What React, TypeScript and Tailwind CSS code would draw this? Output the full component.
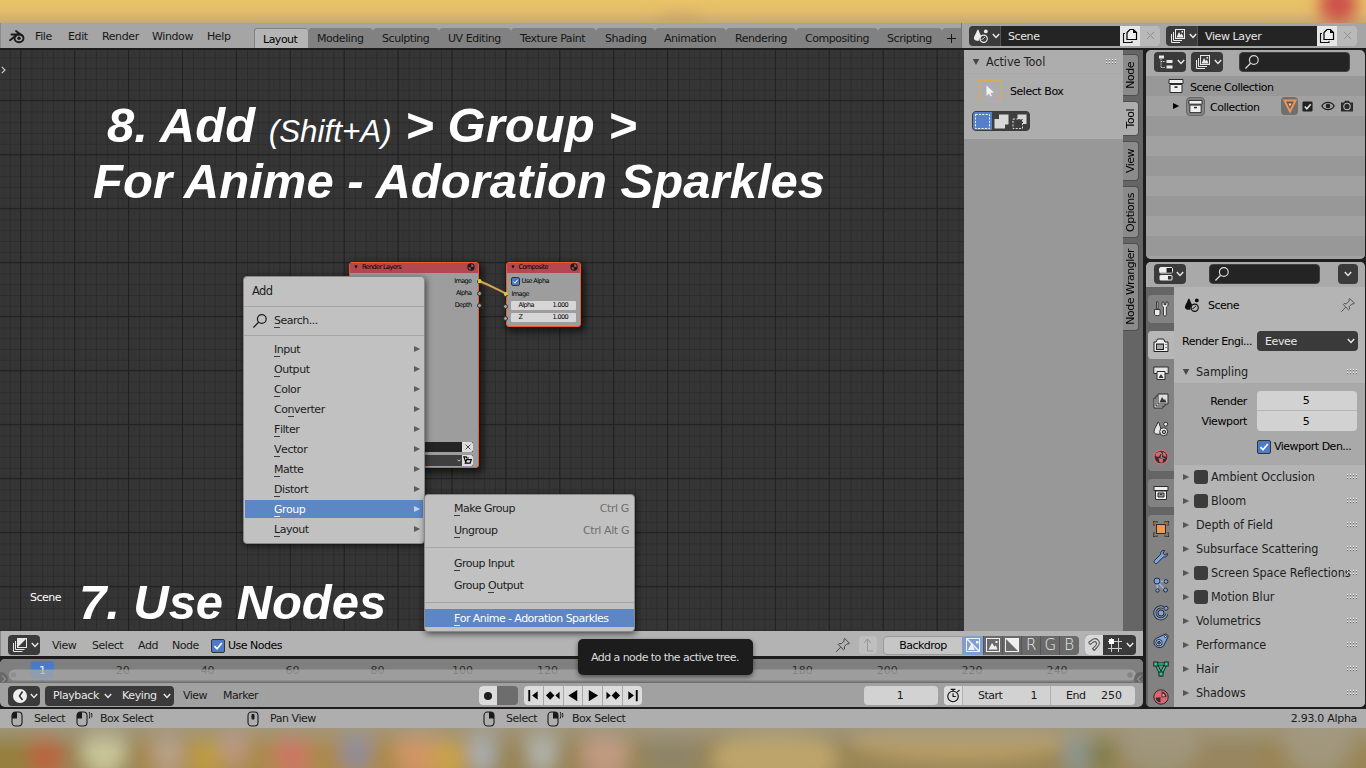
import React from 'react';

type IconProps = { className?: string };

/* ---------- small shared drawings ---------- */

const Chevron = ({ className = '' }: IconProps) => (
  <svg viewBox="0 0 8 6" className={`h-[6px] w-[8px] shrink-0 ${className}`}>
    <path d="M.8 1 4 4.500 7.200 1" fill="none" stroke="currentColor" strokeWidth="1.400" />
  </svg>
);

const SceneIcon = ({ className = '' }: IconProps) => (
  <svg viewBox="0 0 16 16" className={`h-4 w-4 shrink-0 ${className}`}>
    <path d="M4.900 1.400c.6 0 .9 1 1.400 2.600.3 1 1.500 3.200 2 4.200-1.500 1-2.100 2.500-1.800 4.200-1.200.6-4.100.6-5.200-.9-1-1.500.2-3.500 1.100-5.200.9-1.700 1.800-4.900 2.500-4.900z" fill="currentColor" />
    <circle cx="10.700" cy="10.800" r="3.600" fill="none" stroke="currentColor" strokeWidth="1.200" />
    <path d="M8.500 11.500c1.500-.4 2.800-1.400 3.200-2.700" fill="none" stroke="currentColor" strokeWidth="1" />
    <circle cx="12.800" cy="3.400" r="1.900" fill="currentColor" />
  </svg>
);

const LayersIcon = ({ className = '' }: IconProps) => (
  <svg viewBox="0 0 16 16" className={`h-4 w-4 shrink-0 ${className}`}>
    <path d="M1.500 6v8.500h8.500M3.500 4v8.500h8.500" fill="none" stroke="currentColor" strokeWidth="1" />
    <rect x="5.500" y="1.500" width="9" height="9" fill="none" stroke="currentColor" strokeWidth="1" />
    <path d="M6.500 9.500 9 4l1.700 3 1.200-1.500 1.700 4z" fill="currentColor" />
    <rect x="11.500" y="3" width="1.600" height="1.600" fill="currentColor" />
  </svg>
);

const CopyIcon = () => (
  <svg viewBox="0 0 16 16" className="h-4 w-4 shrink-0">
    <path d="M3 5.500H1.500v9h8.500V13" fill="none" stroke="#111" strokeWidth="1.100" />
    <path d="M8 1.500h3.500l3 3v7H5v-7z" fill="#efefef" stroke="#000" strokeWidth="1.200" />
    <path d="M11 1.500v3.500h3.500z" fill="#000" />
  </svg>
);

const CloseIcon = ({ className = '' }: IconProps) => (
  <svg viewBox="0 0 10 10" className={className}>
    <path d="M1 1 9 9M9 1 1 9" stroke="currentColor" strokeWidth="1.100" />
  </svg>
);

const SearchIcon = ({ className = '' }: IconProps) => (
  <svg viewBox="0 0 16 16" className={`h-4 w-4 shrink-0 ${className}`}>
    <circle cx="9.800" cy="6" r="4.400" fill="none" stroke="currentColor" strokeWidth="1.200" />
    <path d="M6.600 9.300 1.400 14.500" stroke="currentColor" strokeWidth="1.300" />
  </svg>
);

const BlenderLogo = () => (
  <svg viewBox="0 0 16 16" className="mt-[2px] h-4 w-4 shrink-0">
    <ellipse cx="10" cy="9.300" rx="4.500" ry="4" fill="none" stroke="#1b1b1b" strokeWidth="1.900" />
    <circle cx="10" cy="9.200" r="1.700" fill="#1b1b1b" />
    <path d="M1 11.200 8 5.800M2.400 5.500h8.300M7 2l6.600 5" fill="none" stroke="#1b1b1b" strokeWidth="1.800" strokeLinecap="round" />
  </svg>
);

const Pin = ({ className = '' }: IconProps) => (
  <svg viewBox="0 0 16 16" className={`h-4 w-4 shrink-0 ${className}`}>
    <path d="M9.600 1.400 14.500 6.300 13.200 7 12 6.800 9.300 9.600 9.500 12 8.600 12.900 3.200 7.500 4.100 6.600 6.500 6.700 9.200 4 9 2.700z" fill="none" stroke="currentColor" strokeWidth="1" />
    <path d="M5.700 10.200 1.200 14.800" stroke="currentColor" strokeWidth="1" />
  </svg>
);

const Grip = () => (
  <svg viewBox="0 0 11 6" className="h-[6px] w-[11px] shrink-0">
    {[0, 3, 6, 9].map((x) => (
      <g key={x}>
        <rect x={x} y="0" width="1" height="1" fill="#f4f4f4" />
        <rect x={x} y="3" width="1" height="1" fill="#f4f4f4" />
        <rect x={x} y="1" width="1" height="1" fill="#6f6f6f" />
        <rect x={x} y="4" width="1" height="1" fill="#6f6f6f" />
      </g>
    ))}
  </svg>
);

const Tri = ({ open, className = '' }: { open?: boolean; className?: string }) => (
  <svg viewBox="0 0 8 8" className={`h-2 w-2 shrink-0 ${className}`}>
    {open ? <path d="M.8 1h6.400L4 7z" fill="currentColor" /> : <path d="M1 .9v6.200L7.200 4z" fill="currentColor" />}
  </svg>
);

const Check = ({ className = '' }: IconProps) => (
  <span className={`flex shrink-0 items-center justify-center rounded-[2px] border border-[#333] bg-[#4f7ac7] ${className}`}>
    <svg viewBox="0 0 12 12" className="h-full w-full">
      <path d="M2.500 6.200 5 8.800 9.800 3" fill="none" stroke="#fff" strokeWidth="1.700" />
    </svg>
  </span>
);

const Archive = ({ className = '' }: IconProps) => (
  <svg viewBox="0 0 16 16" className={`h-4 w-4 shrink-0 ${className}`}>
    <path d="M1 1.500h14v4H1zM2 6.500h12v8H2z" fill="#f0f0f0" stroke="#2a2a2a" strokeWidth="1" />
    <rect x="6.500" y="8.300" width="3" height="1.600" fill="#222" />
  </svg>
);

const MatBall = ({ className = '' }: IconProps) => (
  <svg viewBox="0 0 10 10" className={className}>
    <circle cx="5" cy="5" r="4.600" fill="#1b1b1b" />
    <path d="M5.300 1.400A3.500 3.500 0 0 1 8.500 4.600L5.300 5z" fill="#b8505a" />
    <path d="M4.700 5.200 1.600 5.600A3.500 3.500 0 0 0 4.700 8.500z" fill="#b8505a" />
  </svg>
);

const DarkBtn = ({ children, className = '' }: { children: React.ReactNode; className?: string }) => (
  <div className={`flex h-5 items-center rounded-[4px] bg-[#3a3a3a] text-[#e8e8e8] ${className}`}>{children}</div>
);

/* ---------- top bar ---------- */

const menus = [
  ['File', 'w-[33px]'],
  ['Edit', 'w-[34px]'],
  ['Render', 'w-[50px]'],
  ['Window', 'w-[55px]'],
  ['Help', 'w-[47px]'],
];

const tabs = [
  ['Modeling', 'w-[65px]'],
  ['Sculpting', 'w-[66px]'],
  ['UV Editing', 'w-[72px]'],
  ['Texture Paint', 'w-[85px]'],
  ['Shading', 'w-[59px]'],
  ['Animation', 'w-[71px]'],
  ['Rendering', 'w-[70px]'],
  ['Compositing', 'w-[82px]'],
  ['Scripting', 'w-[64px]'],
];

const DataBlock = ({ icon, name }: { icon: React.ReactNode; name: string }) => (
  <div className="flex h-5 w-[191px] overflow-hidden rounded-[4px]">
    <div className="flex w-[31px] items-center gap-[3px] bg-[#3b3b3b] pl-1 text-[#ececec]">
      {icon}
      <Chevron />
    </div>
    <div className="flex w-[120px] items-center border-l border-[#555] bg-[#242424] pl-[7px] pt-[2px] tracking-[-0.4px] text-[#e6e6e6]">{name}</div>
    <div className="flex w-5 items-center justify-center bg-[#e6e6e6]"><CopyIcon /></div>
    <div className="flex w-5 items-center justify-center bg-[#b9b9b9] text-[#8f8f8f]">
      <CloseIcon className="h-[9px] w-[9px]" />
    </div>
  </div>
);

const TopBar = () => (
  <div className="flex h-[25px] shrink-0 border-l border-[#8a8a8a] bg-[#a5a5a5] text-[#161616]">
    <div className="flex w-[253px] items-center pl-[8px]">
      <BlenderLogo />
      <div className="w-[10px]" />
      {menus.map(([m, w]) => (
        <div key={m} className={`shrink-0 pt-[2px] tracking-[-0.4px] ${w}`}>{m}</div>
      ))}
    </div>
    <div className="flex w-[707px] items-end">
      <div className="flex h-5 w-[54px] shrink-0 items-center rounded-t-[3px] border-l border-t border-[#808080] bg-[#b5b5b5] pl-2 pt-[2px] text-black">Layout</div>
      {tabs.map(([t, w]) => (
        <div key={t} className={`flex h-5 shrink-0 items-center rounded-t-[4px] bg-[#818181] pl-[9px] pt-[2px] tracking-[-0.450px] ${w}`}>{t}</div>
      ))}
      <div className="flex h-5 w-[19px] items-center justify-center rounded-tl-[4px] bg-[#818181]">
        <svg viewBox="0 0 9 9" className="h-[9px] w-[9px]"><path d="M4.500 0v9M0 4.500h9" stroke="#151515" strokeWidth="1" /></svg>
      </div>
    </div>
    <div className="flex flex-1 items-center gap-[6px] border-l border-[#747474] pl-[7px]">
      <DataBlock icon={<SceneIcon />} name="Scene" />
      <DataBlock icon={<LayersIcon />} name="View Layer" />
    </div>
  </div>
);

/* ---------- node canvas ---------- */

const Grid = () => (
  <svg className="absolute inset-0 h-full w-full">
    <defs>
      <pattern id="minor" x="9.800" y="7.400" width="10.780" height="10.800" patternUnits="userSpaceOnUse">
        <path d="M0 .5h10.780M.5 0v10.800" stroke="#2c2c2c" strokeWidth="1" />
        <path d="M5.500 0v10.800" stroke="#303030" strokeWidth=".8" />
      </pattern>
      <pattern id="major" x="20.200" y="49.900" width="53.900" height="54" patternUnits="userSpaceOnUse">
        <path d="M0 .5h53.900M.5 0v54" stroke="#212121" strokeWidth="1" />
      </pattern>
    </defs>
    <rect width="100%" height="100%" fill="#353535" />
    <rect width="100%" height="100%" fill="url(#minor)" />
    <rect width="100%" height="100%" fill="url(#major)" />
  </svg>
);

const Socket = ({ className, fill = 'bg-[#a1a1a1]' }: { className: string; fill?: string }) => (
  <span className={`absolute h-[5px] w-[5px] rounded-full border border-[#2c2c2c] ${fill} ${className}`} />
);

const RenderLayers = () => (
  <div className="absolute left-[349px] top-[212px] flex h-[206px] w-[130px] flex-col rounded-[3px] border-[1.500px] border-[#f15a24] bg-[#9d9d9d] text-[6.500px] leading-none tracking-[-0.6px] text-black shadow-[2px_3px_7px_2px_rgba(0,0,0,0.6)]">
    <div className="flex h-[9.500px] items-center bg-[#b54751] pb-px pl-1 pr-[3px]">
      <Tri open className="!h-1 !w-1" />
      <span className="ml-1 flex-1">Render Layers</span>
      <MatBall className="h-2 w-2" />
    </div>
    <div className="flex flex-col items-end gap-[5.500px] pr-[6.500px] pt-[5px]">
      <span>Image</span><span>Alpha</span><span>Depth</span>
    </div>
    <div className="mt-auto flex flex-col gap-[3px] pb-[1.500px] pr-[5px]">
      <div className="ml-5 flex h-[10px] bg-[#242424]">
        <span className="ml-auto flex w-[11px] items-center justify-center rounded-r-[2px] bg-[#dedede]"><CloseIcon className="h-[6px] w-[6px]" /></span>
      </div>
      <div className="ml-5 flex h-[11px] items-center justify-end rounded-l-[2px] bg-[#3f3f3f]">
        <Chevron className="!h-[3px] !w-1 text-white" />
        <span className="ml-[1px] flex h-full w-[11px] items-center justify-center rounded-r-[2px] bg-[#dedede]">
          <svg viewBox="0 0 10 9" className="h-[8px] w-[9px]"><path d="M3.500 8.200.9 1h2.600l.8 1.200h2.200M2.500 8 4 4h5.300L8 8z" fill="none" stroke="#000" strokeWidth="1.300" /></svg>
        </span>
      </div>
    </div>
    <Socket className="-right-[3.500px] top-[16px]" fill="bg-[#d6d22c]" />
    <Socket className="-right-[3.500px] top-[28px]" />
    <Socket className="-right-[3.500px] top-[40px]" />
  </div>
);

const Composite = () => (
  <div className="absolute left-[505.500px] top-[212px] flex h-[65px] w-[75.500px] flex-col rounded-[3px] border-[1.500px] border-[#f15a24] bg-[#9d9d9d] text-[6.500px] leading-none tracking-[-0.6px] text-black shadow-[2px_3px_7px_2px_rgba(0,0,0,0.6)]">
    <div className="flex h-[9.500px] shrink-0 items-center bg-[#b54751] pb-px pl-1 pr-[2px]">
      <Tri open className="!h-1 !w-1" />
      <span className="ml-1 flex-1">Composite</span>
      <MatBall className="h-2 w-2" />
    </div>
    <div className="mt-[4px] flex h-[9px] items-center pl-1"><Check className="h-[9px] w-[9px]" /><span className="ml-[2px]">Use Alpha</span></div>
    <div className="mt-[4.500px] flex h-[8px] items-center pl-[5px]">Image</div>
    {[['Alpha', '1.000'], ['Z', '1.000']].map(([a, b]) => (
      <div key={a} className="ml-[4px] mr-[4px] mt-[2.500px] flex h-[9.500px] items-center justify-between rounded-[1px] bg-[#d6d6d6] pl-2 pr-2">
        <span>{a}</span><span>{b}</span>
      </div>
    ))}
    <Socket className="-left-[3.500px] top-[29px]" fill="bg-[#d6d22c]" />
    <Socket className="-left-[3.500px] top-[41px]" />
    <Socket className="-left-[3.500px] top-[53px]" />
  </div>
);

/* `at` is the index of the letter that carries the accelerator mark */
const Accel = ({ text, at = 0 }: { text: string; at?: number }) => (
  <span>
    {text.slice(0, at)}
    <span className="relative">
      {text[at]}
      <span className="absolute -bottom-[1px] left-0 h-px w-[6px] bg-current opacity-80" />
    </span>
    {text.slice(at + 1)}
  </span>
);

const addItems: [string, number][] = [
  ['Input', 0], ['Output', 0], ['Color', 0], ['Converter', 2], ['Filter', 0],
  ['Vector', 0], ['Matte', 0], ['Distort', 0], ['Group', 0], ['Layout', 0],
];

const AddMenu = () => (
  <div className="absolute left-[243px] top-[276px] h-[268px] w-[182px] rounded-[4px] border border-[#888] bg-[#c1c1c1] text-[#1c1c1c] shadow-[1px_2px_6px_rgba(0,0,0,0.6)]">
    <div className="flex h-[30px] items-center border-b border-[#a6a6a6] pb-px pl-2 text-[11.500px] tracking-[-0.6px]">Add</div>
    <div className="flex h-[29px] items-center border-b border-[#a6a6a6] pb-px pl-[8px]">
      <SearchIcon />
      <span className="ml-[6px] pt-px"><Accel text="Search..." /></span>
    </div>
    <div className="flex flex-col px-[1px] pt-[3px]">
      {addItems.map(([t, at]) => (
        <div
          key={t}
          className={`my-[1px] flex h-[18px] items-center pl-[29px] pr-[2px] ${t === 'Group' ? 'bg-[#5d86c4] text-white' : ''}`}
        >
          <span className="flex-1 pt-[2px] tracking-[-0.450px]"><Accel text={t} at={at} /></span>
          <Tri className={t === 'Group' ? 'text-[#bdd0ec]' : 'text-[#5d5d5d]'} />
        </div>
      ))}
    </div>
  </div>
);

const SubItem = ({ t, at = 0, k }: { t: string; at?: number; k?: string }) => (
  <div className="flex h-[22px] items-center pl-[29px] pr-[5px]">
    <span className="flex-1 tracking-[-0.5px]"><Accel text={t} at={at} /></span>
    {k && <span className="tracking-[-0.4px] text-[#6f6f6f]">{k}</span>}
  </div>
);

const GroupMenu = () => (
  <div className="absolute left-[424px] top-[494px] h-[138px] w-[211px] rounded-[4px] border border-[#888] bg-[#c1c1c1] text-[#1c1c1c] shadow-[1px_2px_6px_rgba(0,0,0,0.6)]">
    <div className="pb-[5px] pt-[3px]">
      <SubItem t="Make Group" k="Ctrl G" />
      <SubItem t="Ungroup" k="Ctrl Alt G" />
    </div>
    <div className="border-y border-[#a6a6a6] py-[5px]">
      <SubItem t="Group Input" />
      <SubItem t="Group Output" at={6} />
    </div>
    <div className="mt-[6px] flex h-[18px] items-center bg-[#5d86c4] pl-[29px] pt-[2px] tracking-[-0.560px] text-white">
      <Accel text="For Anime - Adoration Sparkles" />
    </div>
  </div>
);

const Canvas = () => (
  <div className="relative w-[964px] shrink-0 overflow-hidden">
    <Grid />
    <svg viewBox="0 0 5 8" className="absolute left-[1px] top-[16px] h-[8px] w-[5px]"><path d="M.8.8 4 4 .8 7.200" fill="none" stroke="#d0d0d0" strokeWidth="1.100" /></svg>
    <RenderLayers />
    <Composite />
    <svg viewBox="0 0 30 16" className="absolute left-[478px] top-[229px] h-4 w-[30px]">
      <path d="M2 3.500 28 15" stroke="#3a332c" strokeWidth="3.500" />
      <path d="M2 2.500C10 5 18 10 28 14.500" fill="none" stroke="#d9a35a" strokeWidth="2" />
      <circle cx="1.500" cy="2" r="2" fill="#d6d22c" />
      <circle cx="28" cy="15" r="2" fill="#d6d22c" />
    </svg>
    <div className="absolute left-[107px] top-[47px] whitespace-pre font-['Liberation_Sans',Arial,sans-serif] text-[49px] font-bold italic leading-[56px] tracking-[0.03px] text-white">
      8. Add <span className="text-[31.300px] font-normal">(Shift+A)</span> &gt; Group &gt;
    </div>
    <div className="absolute left-[93px] top-[103px] whitespace-pre font-['Liberation_Sans',Arial,sans-serif] text-[49px] font-bold italic leading-[56px] tracking-[0.02px] text-white">
      For Anime - Adoration Sparkles
    </div>
    <div className="absolute left-[79px] top-[524px] whitespace-pre font-['Liberation_Sans',Arial,sans-serif] text-[49px] font-bold italic leading-[56px] tracking-[-0.05px] text-white">
      7. Use Nodes
    </div>
    <div className="absolute left-[30px] top-[541px] text-white">Scene</div>
  </div>
);

const sideTabs = [
  ['Node', 'h-[42px]'],
  ['Tool', 'h-[35px]'],
  ['View', 'h-[40px]'],
  ['Options', 'h-[52px]'],
  ['Node Wrangler', 'h-[88px]'],
];

const SidePanel = () => (
  <div className="flex flex-1">
    <div className="w-[159px] bg-[#989898]">
      <div className="h-[89px] bg-[#adadad] text-black">
        <div className="flex h-[24px] items-center border-b border-[#a9a9a9] pl-[8px] pr-[6px] font-['DejaVu_Sans_Condensed','DejaVu_Sans',sans-serif] text-[12.500px] text-[#1f1f1f]">
          <Tri open className="text-[#444]" />
          <span className="ml-[6px] flex-1 tracking-[-0.070px]">Active Tool</span>
          <Grip />
        </div>
        <div className="mt-[6px] flex h-[22px] items-center pl-[15px] tracking-[-0.450px]">
          <svg viewBox="0 0 22 22" className="h-[22px] w-[22px]">
            <rect x=".5" y=".5" width="21" height="21" fill="none" stroke="#f0a92a" strokeWidth="1" strokeDasharray="3 1.500" />
            <path d="M7.500 5.500v10.500l2.500-2.500 1.300 3 1.500-.7-1.200-2.800 3.400-.4z" fill="#f3f3f3" />
          </svg>
          <span className="ml-[9px] pt-[2px]">Select Box</span>
        </div>
        <div className="ml-[8px] mt-[9px] flex h-[20px] w-[58px] overflow-hidden rounded-[4px] border border-[#3c3c3c] bg-[#3e3e3e]">
          <div className="flex w-[19px] items-center justify-center bg-[#557fc9]">
            <svg viewBox="0 0 15 15" className="h-[15px] w-[15px]"><rect x=".5" y=".5" width="14" height="14" fill="none" stroke="#fff" strokeDasharray="2 1.400" /></svg>
          </div>
          <div className="flex w-[19px] items-center justify-center">
            <svg viewBox="0 0 15 15" className="h-[15px] w-[15px]"><path d="M5 .5h9.500v10H11v4H.5V5H5z" fill="#d8d8d8" /></svg>
          </div>
          <div className="flex w-[19px] items-center justify-center">
            <svg viewBox="0 0 15 15" className="h-[15px] w-[15px]"><path d="M5.500.5h9v9.500H11V5H5.500z" fill="#d8d8d8" /><rect x="1" y="5" width="9.500" height="9.500" fill="none" stroke="#d8d8d8" strokeDasharray="2 1.400" /></svg>
          </div>
        </div>
      </div>
    </div>
    <div className="flex w-5 flex-col gap-[5px] bg-[#656565] pt-[4px] text-black">
      {sideTabs.map(([t, h]) => (
        <div
          key={t}
          className={`flex w-[16px] items-center justify-center rounded-r-[4px] border border-l-0 border-[#4f4f4f] ${h} ${t === 'Tool' ? 'bg-[#adadad]' : 'bg-[#8b8b8b]'}`}
        >
          <span className="rotate-180 whitespace-nowrap leading-[14px] [writing-mode:vertical-rl]">{t}</span>
        </div>
      ))}
    </div>
  </div>
);

const ImgGlyph = ({ kind }: { kind: number }) => (
  <svg viewBox="0 0 14 14" className="h-[14px] w-[14px]">
    <rect x=".5" y=".5" width="13" height="13" fill="none" stroke="#f0f0f0" strokeWidth="1" />
    {kind === 0 && <path d="M2 12 5.500 5 9 12zM10 3h2.500v2.500H10z" fill="#f0f0f0" />}
    {kind === 0 && <path d="M1 1 13 13" stroke="#f0f0f0" strokeWidth="1.600" />}
    {kind === 1 && <path d="M2.500 11.500 6 5l2.500 3.500L10 7.500l1.500 4zM9.500 3h2v2h-2z" fill="#f0f0f0" />}
    {kind === 2 && <path d="M1 1h12v12z" fill="#f0f0f0" />}
  </svg>
);

const NodeHeader = () => (
  <div className="flex h-[25px] shrink-0 items-center border-l border-[#888] bg-[#b3b3b3] text-[#1a1a1a]">
    <DarkBtn className="ml-[7px] mt-[3px] w-[32px] gap-[3px] pl-1">
      <svg viewBox="0 0 16 16" className="h-4 w-4"><path d="M1.500 6v8.500h9M3.500 4v8.500h9" fill="none" stroke="currentColor" /><rect x="5.500" y="1.500" width="9" height="9" fill="none" stroke="currentColor" /><path d="M6 2h8L6 10z" fill="currentColor" /></svg>
      <Chevron />
    </DarkBtn>
    <div className="mt-[4px] flex items-center tracking-[-0.450px]">
      <div className="ml-[12px] w-[40px]">View</div>
      <div className="w-[46px]">Select</div>
      <div className="w-[34px]">Add</div>
      <div className="w-[39px]">Node</div>
      <Check className="h-[14px] w-[14px]" />
      <div className="ml-[3px] tracking-[-0.5px] text-black">Use Nodes</div>
    </div>
    <div className="ml-auto mr-[7px] mt-[3px] flex h-5 items-center">
      <Pin className="text-[#444]" />
      <div className="ml-[8px] flex h-[18px] w-[18px] items-center justify-center rounded-[4px] bg-[#bfbfbf]">
        <svg viewBox="0 0 12 14" className="h-[14px] w-3"><path d="M2 5 5.500 1 9 5M5.500 1v12H11" fill="none" stroke="#979797" /></svg>
      </div>
      <div className="ml-[6px] flex h-[19px] w-[80px] items-center justify-center rounded-l-[4px] border border-[#9a9a9a] bg-[#c6c6c6] pt-px text-black">Backdrop</div>
      <div className="flex h-[19px] w-[116px] overflow-hidden rounded-r-[4px] bg-[#6a6a6a] text-[#ececec]">
        <div className="flex w-5 items-center justify-center bg-[#7f9fd4]"><ImgGlyph kind={0} /></div>
        <div className="flex w-[19px] items-center justify-center border-l border-[#555]"><ImgGlyph kind={1} /></div>
        <div className="flex w-[19px] items-center justify-center border-l border-[#555]"><ImgGlyph kind={2} /></div>
        {['R', 'G', 'B'].map((c) => (
          <div key={c} className="flex w-[19px] items-center justify-center border-l border-[#555] text-[15px] font-extralight">{c}</div>
        ))}
      </div>
      <div className="ml-[6px] flex h-5 w-[51px] overflow-hidden rounded-[4px] bg-[#3a3a3a] text-[#eaeaea]">
        <div className="flex w-[18px] items-center justify-center bg-[#d8d8d8]">
          <svg viewBox="0 0 16 16" className="h-4 w-4"><path d="M2.500 5.500 5.500 3.200C8.500 1 11 1.500 12.500 3.500c1.500 2.200 1 4.500-1.500 7L8.200 13.500M2.500 5.500l1.700 2L7 5.400c1.400-1 2.500-1 3.200 0 .7 1.100.4 2.200-.8 3.500L6.500 11.800l1.700 1.700" fill="none" stroke="#5a5a5a" strokeWidth="1.100" /></svg>
        </div>
        <div className="flex items-center gap-[3px] pl-[4px]">
          <svg viewBox="0 0 16 16" className="h-4 w-4"><path d="M4.500 1v14M11.500 1v14M1 4.500h14M1 11.500h14" stroke="#cfcfcf" fill="none" /><rect x="2" y="2" width="5" height="5" fill="#fff" /></svg>
          <Chevron />
        </div>
      </div>
    </div>
  </div>
);

/* ---------- timeline ---------- */

const frames = [20, 40, 60, 80, 100, 120, 140, 160, 180, 200, 220, 240];

const playIcons = [
  'M3 2h2v12H3zM13 3.500v9L7 8z',
  'M.500 8 5 3.500 9.500 8 5 12.500zM15 4v8L10.500 8z',
  'M12.500 2v12L3 8z',
  'M3.500 2v12L13.500 8z',
  'M1 4v8l4.500-4zM6.500 8 11 3.500 15.500 8 11 12.500z',
  'M3 3.500v9L9 8zM11 2h2v12h-2z',
];

const Timeline = () => (
  <div className="flex h-[48px] shrink-0 flex-col overflow-hidden rounded-[5px] bg-[#a1a1a1]">
    <div className="relative h-[24px] shrink-0 border-b border-[#6f6f6f] bg-[#7f7f7f]">
      <svg className="absolute inset-0 h-full w-full tracking-normal">
        {frames.map((f) => (
          <text key={f} x={42 + (f - 1) * 4.247} y="15" textAnchor="middle" fontSize="11" fill="#2a2a2a" fontFamily="DejaVu Sans">{f}</text>
        ))}
        <rect x="30.500" y="2" width="23.500" height="17" rx="3" fill="#4a7ac6" />
        <rect x="42" y="18" width="1.200" height="6" fill="#4a7ac6" />
        <text x="42.500" y="15" textAnchor="middle" fontSize="11" fill="#fff" fontFamily="DejaVu Sans">1</text>
        <rect x="9" y="10.500" width="1127" height="11" rx="5.500" fill="#a9a9a9" fillOpacity=".72" />
        <circle cx="13.500" cy="16" r="2.700" fill="#8f8f8f" />
        <circle cx="1130" cy="16" r="2.700" fill="#848484" />
        <circle cx="1" cy="20" r="7" fill="#686868" />
        <path d="M2 16.500 5.500 20 2 23.500" fill="none" stroke="#aaa" />
        <circle cx="1141" cy="20" r="7" fill="#686868" />
        <path d="M1141 16.500 1137.500 20 1141 23.500" fill="none" stroke="#aaa" />
      </svg>
    </div>
    <div className="flex h-[24px] items-center pt-px text-[#1a1a1a]">
      <DarkBtn className="ml-[8px] mt-px w-[32px] gap-[3px] pl-[5px]">
        <svg viewBox="0 0 14 14" className="h-[14px] w-[14px]"><circle cx="7" cy="7" r="7" fill="#eee" /><path d="M9.500 2.500 6.500 7l3 4" fill="none" stroke="#333" strokeWidth="1.600" /></svg>
        <Chevron />
      </DarkBtn>
      <DarkBtn className="ml-[5px] mt-px w-[129px] pl-2 tracking-[-0.4px]">
        <span className="w-[51px]">Playback</span><Chevron />
        <span className="ml-[10px] w-[41px]">Keying</span><Chevron />
      </DarkBtn>
      <div className="ml-[9px] w-[40px] pt-px">View</div>
      <div className="w-[256px] pt-px">Marker</div>
      <div className="flex h-[19px] w-[39px] overflow-hidden rounded-[4px] bg-[#6d6d6d]">
        <div className="flex w-[18px] items-center justify-center bg-[#dcdcdc]"><span className="h-2 w-2 rounded-full bg-[#1d1d1d]" /></div>
      </div>
      <div className="ml-[6px] flex h-[19px] w-[118px] gap-px overflow-hidden rounded-[4px] bg-[#a8a8a8]">
        {playIcons.map((d) => (
          <div key={d} className="flex flex-1 items-center justify-center bg-[#dcdcdc]">
            <svg viewBox="0 0 16 16" className="h-[15px] w-[16px]"><path d={d} fill="#050505" /></svg>
          </div>
        ))}
      </div>
      <div className="ml-auto flex h-[19px] w-[74px] items-center justify-center rounded-[4px] bg-[#d2d2d2] pr-[2px] pt-px">1</div>
      <div className="ml-[6px] mr-[8px] flex h-[19px] w-[191px] overflow-hidden rounded-[4px] bg-[#d2d2d2]">
        <div className="flex w-[19px] items-center justify-center border-r border-[#b0b0b0] bg-[#dcdcdc]">
          <svg viewBox="0 0 16 16" className="h-[15px] w-[15px]"><circle cx="7.500" cy="9" r="5.600" fill="none" stroke="#111" strokeWidth="1.200" /><path d="M7.500 5.500V9h3M5 1.500h5M7.500 1.500v2M12 4l2.500-1.500" fill="none" stroke="#111" strokeWidth="1.200" /></svg>
        </div>
        <div className="flex w-[88px] items-center justify-between border-r border-[#b0b0b0] pl-[15px] pr-[13px] pt-px"><span>Start</span><span>1</span></div>
        <div className="flex flex-1 items-center justify-between pl-[15px] pr-[13px] pt-px"><span>End</span><span className="tracking-normal">250</span></div>
      </div>
    </div>
  </div>
);

/* ---------- outliner ---------- */

const Outliner = () => (
  <div className="h-[209px] shrink-0 overflow-hidden rounded-[5px] bg-[#a9a9a9] text-black">
    <div className="flex h-[26px] items-center pb-[2px] pl-[8px]">
      <DarkBtn className="w-[32px] gap-[3px] pl-1">
        <svg viewBox="0 0 16 16" className="h-4 w-4"><path d="M1 1.500h5v3H1zM8.500 6h6v3h-6zM8.500 11.500h6v3h-6z" fill="currentColor" /><path d="M3 5v8.500h4.500M3 7.500h4.500" fill="none" stroke="currentColor" strokeDasharray="1.200 1" /></svg>
        <Chevron />
      </DarkBtn>
      <DarkBtn className="ml-[5px] w-[32px] gap-[3px] pl-1"><LayersIcon /><Chevron /></DarkBtn>
      <div className="ml-[16px] flex h-5 w-[111px] items-center rounded-[4px] border border-[#404040] bg-[#242424] pl-[4px] text-[#d8d8d8]"><SearchIcon /></div>
    </div>
    <div className="flex h-5 items-center bg-[#989898] pl-[22px]">
      <Archive />
      <span className="ml-[6px] pt-[3px]">Scene Collection</span>
    </div>
    <div className="flex h-5 items-center bg-[#a1a1a1] pl-[26px]">
      <Tri className="text-black" />
      <span className="ml-[6px] flex h-[19px] w-[19px] items-center justify-center rounded-[4px] border border-[#666] bg-[#858585]"><Archive className="!h-[15px] !w-[15px]" /></span>
      <span className="ml-[5px] w-[69px] pt-[3px]">Collection</span>
      <span className="ml-[2px] flex h-[18px] w-[17px] items-center justify-center rounded-[4px] bg-[#6f6f6f]">
        <svg viewBox="0 0 16 16" className="h-4 w-4"><path d="M2.500 2.500h11L8 13.500z" fill="#6f5540" stroke="#eb9657" strokeWidth="2" /><path d="M6.500 5.500h3L8 8.500z" fill="#ddd" /></svg>
      </span>
      <svg viewBox="0 0 12 12" className="ml-[4px] h-[11px] w-[11px]"><rect x=".5" y=".5" width="11" height="11" rx="1.500" fill="#222" /><path d="M3 6l2.300 2.500L9.500 3.500" fill="none" stroke="#e8e8e8" strokeWidth="1.600" /></svg>
      <svg viewBox="0 0 14 12" className="ml-[8px] h-[12px] w-[14px]"><path d="M.8 6C3.500 1.200 10.500 1.200 13.200 6 10.500 10.800 3.500 10.800.8 6z" fill="none" stroke="#222" strokeWidth="1.300" /><circle cx="7" cy="6" r="2.300" fill="#222" /></svg>
      <svg viewBox="0 0 14 12" className="ml-[5px] h-[12px] w-[14px]"><path d="M1 2.500h3L5 .7h4l1 1.800h3v9H1z" fill="#2a2a2a" /><circle cx="7" cy="6.500" r="3.200" fill="none" stroke="#bbb" strokeWidth="1.100" /></svg>
    </div>
    {[0, 1, 2, 3, 4, 5, 6, 7].map((i) => (
      <div key={i} className={`h-5 ${i % 2 ? 'bg-[#a1a1a1]' : 'bg-[#989898]'}`} />
    ))}
  </div>
);

/* ---------- properties ---------- */

const Wrench = ({ fill }: { fill: string }) => (
  <path d="M14.600 4.300 12 6.200 9.900 4.200 11.700 1.500C9.500.8 7.300 2.600 7.700 5.300L1.500 11.500c-1.500 1.800.8 4 2.700 2.600L10.400 8c2.700.5 4.800-1.500 4.200-3.700z" fill={fill} stroke="#2b2b2b" />
);

const propIcons: { [k: string]: React.ReactNode } = {
  tool: <g stroke="#2b2b2b" fill="#ececec" strokeWidth=".9"><path d="M3.500.8h1.500v7H3.500z" /><path d="M1.500 8.500h5.500v5c0 1.500-5.500 1.500-5.500 0z" /><path d="M9 1v3.500l1.500 1.700V14c0 1.400 2.800 1.400 2.800 0V6.200L15 4.500V1l-2 0v2.700h-2V1z" /></g>,
  render: <g stroke="#202020"><path d="M1 5h2l1.500-3h6L12 5h3v9.500H1z" fill="#eee" /><rect x="3.500" y="7" width="7" height="5.500" fill="#777" /><path d="M4 9h6M4 11h6" stroke="#eee" strokeWidth=".8" /><path d="M12.500 7.500h1M12.500 10.500h1" /></g>,
  output: <g stroke="#2b2b2b"><path d="M.8 2h14.400v6.500H.8z" fill="#e4e4e4" /><path d="M4 6.500h8v8H4z" fill="#eee" /><path d="M5.500 13 8 9l2.500 4z" fill="#333" stroke="none" /></g>,
  view: <g stroke="#2b2b2b" fill="#ddd"><path d="M1 5h9v10H1z" /><path d="M3 3h9v10H3z" /><path d="M5 1h10v10H5z" /><path d="M6.500 9.500 9 4l2 3 1-1 1.500 3.500z" fill="#333" stroke="none" /></g>,
  scene: <g stroke="#2b2b2b" fill="#e6e6e6"><path d="M5 1c1 0 1.500 3 3.300 7.500L7 13C5 13.500 1 13.300 1 10.500 1 8 3.500 5 5 1z" /><circle cx="10.700" cy="10.700" r="4" /><circle cx="12.700" cy="3.200" r="2" /><circle cx="11" cy="11" r="1.700" fill="#aaa" /></g>,
  world: <g><circle cx="8" cy="8" r="7" fill="#303030" stroke="#d96870" strokeWidth="1.300" /><path d="M3 4.500 6 2.500l2 2L5.500 8 2.500 7zM9.500 2.500l3 2 1 3.500-3-1zM5.500 9l4.500 1-.5 4-3-1z" fill="#d96870" /><path d="M7 2.500l2 3-1 3 3.500 1" stroke="#eaa9ad" strokeWidth=".8" fill="none" /></g>,
  collection: <g stroke="#2b2b2b" fill="#eee"><path d="M1 1.500h14v4H1zM2.500 6h11v8.500h-11z" /><path d="M5 8h6v4H5z" fill="#999" /><path d="M7 9.500h2" /></g>,
  object: <g><rect x="3.500" y="3.500" width="9" height="9" fill="#f09a4e" stroke="#2b2b2b" /><path d="M1 4.500V1h3.500M11.500 1H15v3.500M15 11.500V15h-3.500M4.500 15H1v-3.500" fill="none" stroke="#2b2b2b" strokeWidth="2.200" /><path d="M1.200 4V1.200H4M12 1.200h2.800V4M14.800 12v2.800H12M4 14.800H1.200V12" fill="none" stroke="#d08a50" strokeWidth=".9" /></g>,
  modifier: <Wrench fill="#7aa4e6" />,
  particles: <g stroke="#2b2b2b"><path d="M4 4 13 4.500M4 4l8 9M4 4l.5 9" stroke="#9bb8e8" strokeWidth="1.500" /><circle cx="4" cy="4" r="3" fill="#7aa4e6" /><circle cx="13" cy="4.500" r="1.900" fill="#7aa4e6" /><circle cx="12.500" cy="13" r="2" fill="#7aa4e6" /><circle cx="4.500" cy="13.500" r="1.700" fill="#7aa4e6" /></g>,
  physics: <g fill="none"><path d="M10.500 2.500A6 6 0 1 0 13.700 9" stroke="#2b2b2b" strokeWidth="3" /><path d="M10.500 2.500A6 6 0 1 0 13.700 9" stroke="#7aa4e6" strokeWidth="1.300" /><circle cx="8" cy="8" r="3" fill="#7aa4e6" stroke="#2b2b2b" /><circle cx="13" cy="3.300" r="2" fill="#7aa4e6" stroke="#2b2b2b" /></g>,
  constraint: <g stroke="#2b2b2b"><path d="M3 5.500 12 1.200c2-.6 3.500 1 2.900 3L10.500 13C7 16.500.5 14 1 9c.1-1.500.8-2.700 2-3.500z" fill="#7aa4e6" /><circle cx="6" cy="9.700" r="3.200" fill="#b9cdee" /><circle cx="6" cy="9.700" r="1.400" fill="#3a5a9a" /><circle cx="12.500" cy="3.500" r="1" fill="#eee" /></g>,
  data: <g><path d="M3 3h10L8 13z" fill="none" stroke="#222" strokeWidth="3.200" /><path d="M3 3h10L8 13z" fill="none" stroke="#1fcf95" strokeWidth="1.500" /><g fill="#1fcf95" stroke="#222"><rect x=".8" y="1" width="4" height="4" /><rect x="11.200" y="1" width="4" height="4" /><rect x="6" y="11" width="4" height="4" /></g></g>,
  material: <g><circle cx="8" cy="8" r="7.200" fill="#dd6672" stroke="#2b2b2b" /><path d="M8.500 2.500A5.500 5.500 0 0 1 13.500 8l-5 .5zM7.500 8.300 2.600 8.800A5.500 5.500 0 0 0 7.500 13.500z" fill="#3a2a2c" /><path d="M9.500 4.200a4 4 0 0 1 2.500 3l-2.500.3z" fill="#eab3b8" /></g>,
};

const railGroups = [['tool'], ['render', 'output', 'view', 'scene', 'world'], ['collection'], ['object', 'modifier', 'particles', 'physics', 'constraint', 'data', 'material']];

const Rail = () => (
  <div className="flex w-[28px] shrink-0 flex-col gap-[7.900px] bg-[#656565] pl-[2px] pt-[8px]">
    {railGroups.map((g) => (
      <div key={g[0]} className="flex shrink-0 flex-col rounded-l-[4px] bg-[#828282]">
        {g.map((id) => (
          <div key={id} className={`flex h-[28.050px] shrink-0 items-center justify-center rounded-l-[4px] ${id === 'render' ? 'bg-[#b7b7b7]' : ''}`}>
            <svg viewBox="0 0 16 16" className="h-4 w-4">{propIcons[id]}</svg>
          </div>
        ))}
      </div>
    ))}
  </div>
);

const panels: [string, boolean][] = [
  ['Ambient Occlusion', true], ['Bloom', true], ['Depth of Field', false], ['Subsurface Scattering', false],
  ['Screen Space Reflections', true], ['Motion Blur', true], ['Volumetrics', false], ['Performance', false],
  ['Hair', false], ['Shadows', false],
];

const Properties = () => (
  <div className="flex min-h-0 flex-1 flex-col overflow-hidden rounded-[5px] bg-[#b3b3b3] text-black">
    <div className="flex h-[25px] shrink-0 items-center bg-[#a9a9a9] pb-px pl-[8px]">
      <DarkBtn className="w-[32px] gap-[3px] pl-[5px]">
        <svg viewBox="0 0 14 14" className="h-[14px] w-[14px]"><rect x=".5" y=".5" width="13" height="5.500" rx="1.500" fill="none" stroke="#eee" /><rect x="7.500" y="1" width="5.500" height="4.500" fill="#222" /><rect x="1" y="1" width="6.500" height="4.500" fill="#eee" /><rect x=".5" y="8" width="13" height="5.500" rx="1.500" fill="#eee" /><rect x="9" y="9" width="3.500" height="3.500" fill="#333" /></svg>
        <Chevron />
      </DarkBtn>
      <div className="ml-[23px] flex h-5 w-[111px] items-center rounded-[4px] border border-[#404040] bg-[#242424] pl-[4px] text-[#d8d8d8]"><SearchIcon /></div>
      <DarkBtn className="ml-[18px] w-5 justify-center"><Chevron /></DarkBtn>
    </div>
    <div className="flex min-h-0 flex-1">
      <Rail />
      <div className="flex min-w-0 flex-1 flex-col bg-[#b4b4b4]">
        <div className="mt-[8px] flex h-5 items-center pl-[10px] pr-[9px]">
          <SceneIcon className="text-[#0e0e0e]" />
          <span className="ml-[8px] flex-1 pt-[2px]">Scene</span>
          <Pin className="text-[#555]" />
        </div>
        <div className="mt-[16px] flex h-5 items-center pl-[8px]">
          <span className="w-[75px] pt-[2px]">Render Engi...</span>
          <DarkBtn className="w-[101px] justify-between pl-[8px] pr-[3px]"><span className="pt-[2px] tracking-[-0.4px]">Eevee</span><Chevron /></DarkBtn>
        </div>
        <div className="mt-[9px] flex h-[23px] items-center pl-[8px] pr-[7px] font-['DejaVu_Sans_Condensed','DejaVu_Sans',sans-serif] text-[12.500px] text-[#1e1e1e]">
          <Tri open className="text-[#484848]" />
          <span className="ml-[6px] flex-1 tracking-[-0.070px]">Sampling</span>
          <Grip />
        </div>
        <div className="h-[82px] shrink-0 bg-[#a9a9a9] pt-[8px]">
          {['Render', 'Viewport'].map((t) => (
            <div key={t} className="flex h-5 items-center">
              <span className="w-[73px] pt-[2px] text-right tracking-[-0.4px]">{t}</span>
              <span className={`ml-[10px] flex h-full w-[100px] items-center justify-center bg-[#d2d2d2] pr-[2px] pt-px ${t === 'Render' ? 'rounded-t-[4px] border-b border-[#b5b5b5]' : 'rounded-b-[4px]'}`}>5</span>
            </div>
          ))}
          <div className="mt-[8px] flex items-center pl-[83px] leading-[14px]">
            <Check className="h-[14px] w-[14px]" /><span className="ml-[3px] pt-px">Viewport Den...</span>
          </div>
        </div>
        {panels.map(([t, box]) => (
          <div key={t} className="flex h-6 shrink-0 items-center pl-[8px] pr-[7px] font-['DejaVu_Sans_Condensed','DejaVu_Sans',sans-serif] text-[12.500px] text-[#1e1e1e]">
            <Tri className="text-[#555]" />
            {box ? <span className="ml-[4px] mr-[3px] h-[14px] w-[14px] rounded-[3px] bg-[#3c3c3c]" /> : <span className="w-[6px]" />}
            <span className="w-0 flex-1 whitespace-nowrap tracking-[-0.100px]">{t}</span>
            <Grip />
          </div>
        ))}
      </div>
    </div>
  </div>
);

/* ---------- status bar ---------- */

const Mouse = ({ part, drag }: { part: 'l' | 'm' | 'r'; drag?: boolean }) => (
  <svg viewBox="0 0 18 16" className="h-4 w-[18px] shrink-0">
    <rect x="1" y="1" width="10" height="14" rx="3.500" fill="none" stroke="#1a1a1a" strokeWidth="1.100" />
    {part === 'l' && <path d="M1 7.500V4.500A3.500 3.500 0 0 1 4.500 1H6v6.500z" fill="#1a1a1a" />}
    {part === 'r' && <path d="M6 1h1.500A3.500 3.500 0 0 1 11 4.500v3H6z" fill="#1a1a1a" />}
    {part === 'm' && <rect x="4.500" y="3" width="3" height="5.500" rx="1" fill="#1a1a1a" />}
    {drag && <path d="M13.200 1c.8 2 .8 4.500 0 6.500M15.500 2c.5 1.500.5 3 0 4.500" fill="none" stroke="#1a1a1a" />}
  </svg>
);

const StatusBar = () => (
  <div className="flex h-[19px] shrink-0 items-center bg-[#aeaeae] pl-[11px] pr-[9px] tracking-[-0.450px] text-[#1a1a1a]">
    <Mouse part="l" /><span className="ml-[5px] w-[42px]">Select</span>
    <Mouse part="l" drag /><span className="ml-[6px] w-[147px]">Box Select</span>
    <Mouse part="m" /><span className="ml-[5px] w-[213px]">Pan View</span>
    <Mouse part="r" /><span className="ml-[5px] w-[41px]">Select</span>
    <Mouse part="r" drag /><span className="ml-[7px]">Box Select</span>
    <span className="ml-auto tracking-[-0.3px]">2.93.0 Alpha</span>
  </div>
);

/* ---------- blurred desktop behind the window ---------- */

const blobs: [number, number, number, number, string][] = [
  [15, 25, 40, 30, '#95803f'], [46, 26, 18, 26, '#b8663f'], [104, 20, 22, 28, '#c8c498'], [168, 22, 15, 26, '#b7a087'],
  [206, 30, 16, 28, '#bb9b45'], [234, 12, 14, 26, '#bd9881'], [292, 26, 18, 26, '#cb7864'], [356, 18, 15, 28, '#918c9a'],
  [420, 22, 24, 30, '#d09565'], [448, 32, 16, 26, '#c7a24c'], [482, 18, 14, 30, '#a9adad'], [542, 18, 15, 28, '#b0b2a9'],
  [605, 24, 24, 28, '#c09a80'], [672, 20, 30, 34, '#8f8566'], [775, 30, 62, 34, '#bda46a'], [960, 10, 110, 24, '#b79d68'],
  [1076, 22, 13, 26, '#8b968f'], [1102, 22, 12, 26, '#827f4d'], [1160, 18, 40, 28, '#9f957a'], [1230, 26, 30, 28, '#978661'], [1318, 16, 34, 30, '#a1977c'],
];

export default function App() {
  return (
    <div className="relative flex h-[768px] w-[1366px] flex-col overflow-hidden bg-[#1d1d1d] font-['DejaVu_Sans',sans-serif] text-[11px] leading-[14px] tracking-[-0.5px]">
      <div className="relative h-[23px] shrink-0 overflow-hidden bg-linear-to-b from-[#e9c467] via-[#e3bd6a] to-[#c9a970]">
        <svg className="h-full w-full">
          <defs><filter id="soft" x="-80%" y="-80%" width="260%" height="260%"><feGaussianBlur stdDeviation="8" /></filter></defs>
          <g filter="url(#soft)">
            <ellipse cx="680" cy="22" rx="24" ry="7" fill="#c9a568" />
            <ellipse cx="1338" cy="4" rx="19" ry="20" fill="#cc5148" />
          </g>
        </svg>
      </div>
      <TopBar />
      <div className="mt-[2px] flex min-h-0 flex-1 pb-[2px]">
        <div className="flex w-[1143px] shrink-0 flex-col">
          <div className="flex h-[581px] shrink-0">
            <Canvas />
            <SidePanel />
          </div>
          <NodeHeader />
          <div className="h-[3px] shrink-0" />
          <Timeline />
        </div>
        <div className="ml-[3px] mr-px flex min-w-0 flex-1 flex-col gap-[3px]">
          <Outliner />
          <Properties />
        </div>
      </div>
      <StatusBar />
      <div className="h-10 shrink-0 overflow-hidden bg-[#9a8555]">
        <svg className="h-full w-full" viewBox="0 0 1366 40">
          <defs>
            <filter id="haze" x="-60%" y="-60%" width="220%" height="220%"><feGaussianBlur stdDeviation="9" /></filter>
            <linearGradient id="fade" x1="0" y1="0" x2="0" y2="1"><stop offset="0" stopColor="#a19a84" stopOpacity=".75" /><stop offset=".6" stopColor="#a19a84" stopOpacity="0" /></linearGradient>
          </defs>
          <g filter="url(#haze)">
            <rect x="-60" y="-40" width="1490" height="130" fill="#998556" />
            <rect x="140" y="-20" width="330" height="90" fill="#ab8a4e" />
            {blobs.map(([x, y, rx, ry, c]) => <ellipse key={x} cx={x} cy={y} rx={rx} ry={ry} fill={c} />)}
          </g>
          <rect width="1366" height="40" fill="url(#fade)" />
        </svg>
      </div>

      <AddMenu />
      <GroupMenu />
      <div className="absolute left-[578px] top-[639px] flex h-[36px] w-[175px] items-center rounded-[5px] bg-[#1c1c1c] pl-[13px] pt-[2px] tracking-[-0.560px] text-[#dcdcdc] shadow-[0_2px_5px_rgba(0,0,0,0.5)]">
        Add a node to the active tree.
      </div>
    </div>
  );
}
